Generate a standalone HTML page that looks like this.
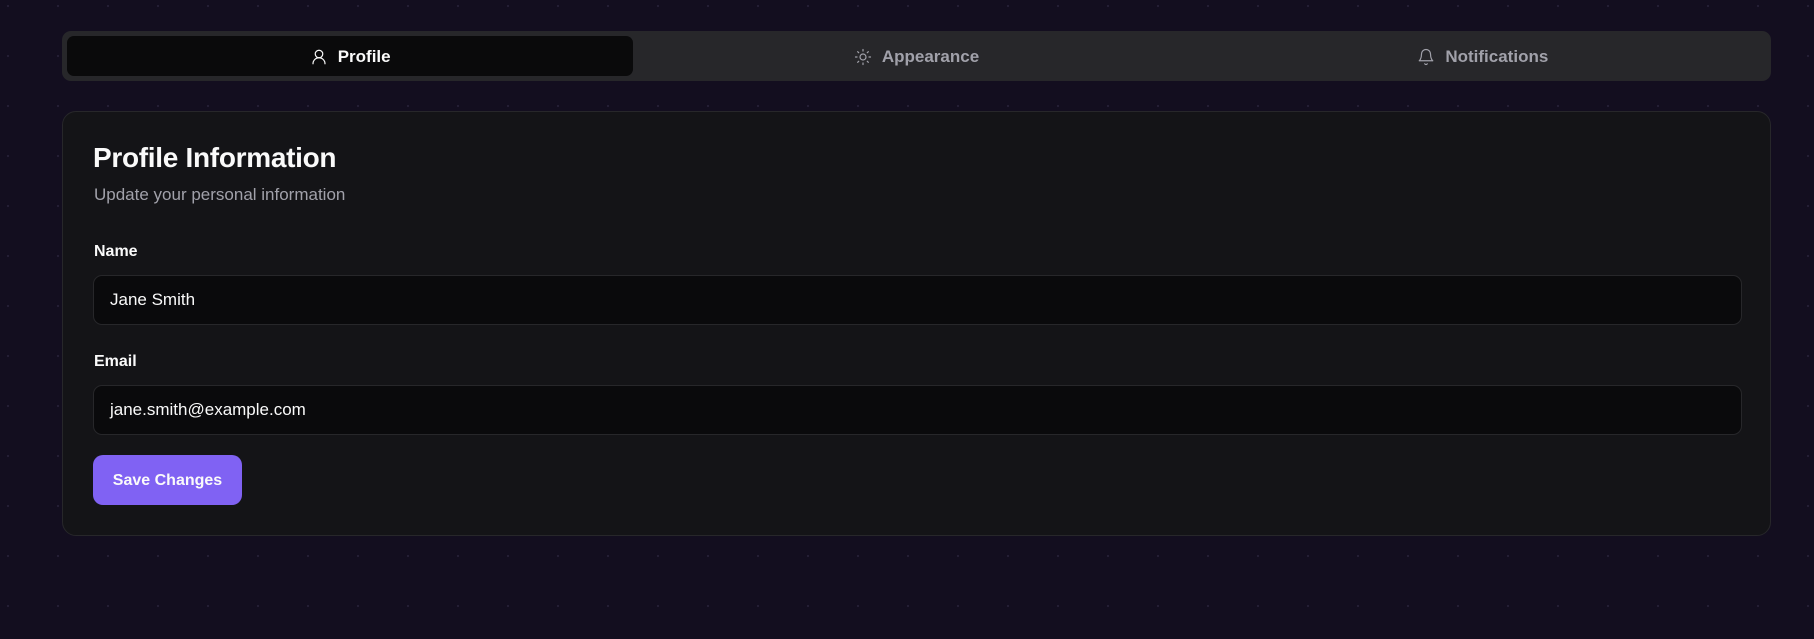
<!DOCTYPE html>
<html><head><style>
*{box-sizing:border-box;margin:0;padding:0}
body{width:1814px;height:639px;overflow:hidden;background-color:#130e1f;background-image:radial-gradient(circle,#29233a 0.8px,transparent 1.1px);background-size:50px 50px;background-position:-17px -19px;font-family:"Liberation Sans",sans-serif;color:#fafafa;position:relative}
.tabs{position:absolute;left:62px;top:31px;width:1709px;height:50px;background:#27272a;border-radius:9px;display:flex;padding:5px}
.tab{flex:1;display:flex;align-items:center;justify-content:center;gap:10px;font-size:17px;font-weight:700;color:#a1a1aa;border-radius:7px;padding-top:2px}
.tab.active{background:#0a0a0b;color:#fafafa}
.tab svg{width:18px;height:18px;fill:none;stroke:currentColor;stroke-width:1.6;stroke-linecap:round;stroke-linejoin:round}
.card{position:absolute;left:62px;top:111px;width:1709px;height:425px;background:#141417;border:1px solid #27272a;border-radius:14px}
h1{position:absolute;left:30px;top:30px;font-size:28px;font-weight:700;letter-spacing:-0.3px}
.sub{position:absolute;left:31px;top:73px;font-size:17px;color:#a1a1aa}
.lbl{position:absolute;left:31px;font-size:16px;font-weight:700}
.inp{position:absolute;left:30px;width:1649px;height:50px;background:#0a0a0c;border:1px solid #27272a;border-radius:9px;padding-left:16px;display:flex;align-items:center;font-size:17px}
.btn{position:absolute;left:30px;top:343px;width:149px;height:50px;background:#8062f3;border-radius:10px;display:flex;align-items:center;justify-content:center;font-size:16px;font-weight:700;padding-top:2px}
</style></head><body>
<div class="tabs">
 <div class="tab active"><svg viewBox="0 0 24 24"><circle cx="12" cy="8" r="5"/><path d="M20 21a8 8 0 0 0-16 0"/></svg>Profile</div>
 <div class="tab"><svg viewBox="0 0 24 24"><circle cx="12" cy="12" r="4"/><path d="M12 2v2M12 20v2M4.9 4.9l1.4 1.4M17.7 17.7l1.4 1.4M2 12h2M20 12h2M6.3 17.7l-1.4 1.4M19.1 4.9l-1.4 1.4"/></svg>Appearance</div>
 <div class="tab"><svg viewBox="0 0 24 24"><path d="M6 8a6 6 0 0 1 12 0c0 7 3 9 3 9H3s3-2 3-9"/><path d="M10.3 21a1.9 1.9 0 0 0 3.4 0"/></svg>Notifications</div>
</div>
<div class="card">
 <h1>Profile Information</h1>
 <div class="sub">Update your personal information</div>
 <div class="lbl" style="top:131px">Name</div>
 <div class="inp" style="top:163px">Jane Smith</div>
 <div class="lbl" style="top:241px">Email</div>
 <div class="inp" style="top:273px">jane.smith@example.com</div>
 <div class="btn">Save Changes</div>
</div>
</body></html>
